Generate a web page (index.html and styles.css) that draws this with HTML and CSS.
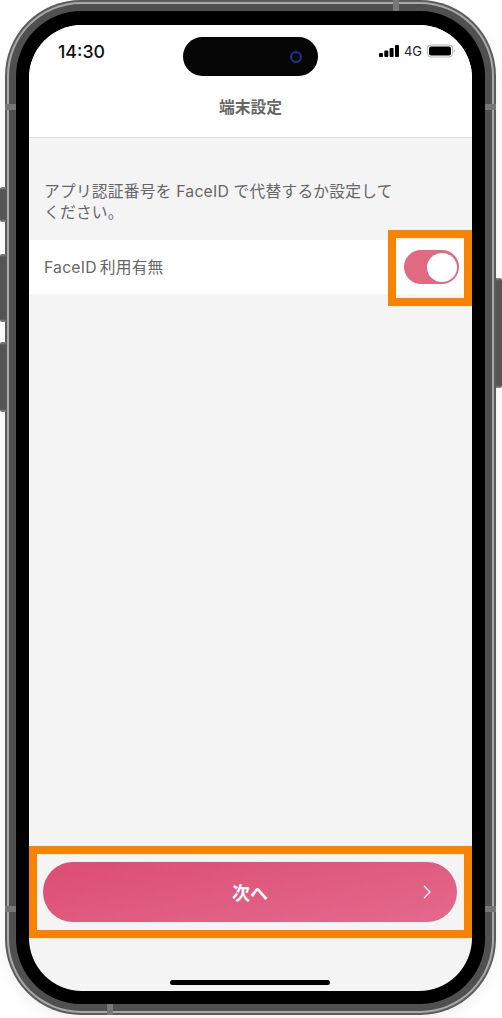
FILE: index.html
```html
<!DOCTYPE html>
<html lang="ja">
<head>
<meta charset="utf-8">
<title>端末設定</title>
<link rel="stylesheet" href="styles.css">
</head>
<body>
<div class="device">
  <span class="side side-l1"></span>
  <span class="side side-l2"></span>
  <span class="side side-l3"></span>
  <span class="side side-r"></span>
  <div class="frame">
    <div class="rim">
      <div class="band">
        <div class="bezel">
          <div class="screen">
            <header class="header">
              <div class="status">
                <span class="time">14:30</span>
                <div class="island"><span class="camera"></span></div>
                <div class="indicators">
                  <svg class="signal" width="20" height="12" viewBox="0 0 20 12"><rect x="0" y="8" width="4" height="4" rx="1"/><rect x="5.300" y="5.500" width="4" height="6.500" rx="1"/><rect x="10.600" y="3" width="4" height="9" rx="1"/><rect x="16" y="0" width="4" height="12" rx="1"/></svg>
                  <span class="network">4G</span>
                  <svg class="battery" width="28" height="14" viewBox="0 0 28 14"><rect x="0.5" y="1" width="25" height="12" rx="3.5" fill="#fff" stroke="#b5b5b5"/><rect x="2" y="2.5" width="22" height="9" rx="2.2" fill="#000"/><path d="M27 5.5v3c.6-.2 1-.8 1-1.500s-.4-1.300-1-1.500z" fill="#a8a8a8"/></svg>
                </div>
              </div>
              <h1 class="title">端末設定</h1>
            </header>
            <main class="content">
              <p class="lead">アプリ認証番号を FaceID で代替するか設定してください。</p>
              <div class="row">
                <span class="row-label">FaceID<span class="row-rest">利用有無</span></span>
                <div class="toggle-wrap">
                  <div class="toggle"><span class="knob"></span></div>
                  <span class="mark mark-toggle"></span>
                </div>
              </div>
            </main>
            <footer class="footer">
              <div class="action">
                <button class="next" type="button">
                  <span>次へ</span>
                  <svg class="chevron" width="8" height="14" viewBox="0 0 8 14"><path d="M1 1l6 6-6 6" fill="none" stroke="#fff" stroke-width="1.200"/></svg>
                </button>
                <span class="mark mark-action"></span>
              </div>
              <div class="home"></div>
            </footer>
          </div>
        </div>
      </div>
    </div>
  </div>
  <span class="tick tick-lt"></span>
  <span class="tick tick-rt"></span>
  <span class="tick tick-lb"></span>
  <span class="tick tick-rb"></span>
  <span class="tick-v tick-top"></span>
  <span class="tick-v tick-bottom"></span>
</div>
</body>
</html>
```
FILE: styles.css
```css
* { box-sizing: border-box; }
html, body { margin: 0; padding: 0; background: #fff; }
body {
  width: 502px;
  height: 1018px;
  overflow: hidden;
  font-family: Inter, "Noto Sans CJK JP", sans-serif;
}
.device {
  position: relative;
  width: 491px;
  height: 1015px;
  margin-left: 5px;
}
.frame {
  height: 100%;
  padding: 2px;
  border-radius: 76px;
  background: #5c5c5c;
  box-shadow: 0 6px 14px rgba(0, 0, 0, .06);
}
.rim {
  height: 100%;
  padding: 2px;
  border-radius: 74px;
  background: #a9a9a9;
}
.band {
  height: 100%;
  padding: 7px;
  border-radius: 72px;
  background: #505050;
}
.bezel {
  height: 100%;
  padding: 14px 13px 13px;
  border-radius: 65px;
  background: #000;
}
.screen {
  display: flex;
  flex-direction: column;
  height: 100%;
  overflow: hidden;
  border-radius: 53px;
  background: #f4f4f4;
}
.header {
  flex: none;
  height: 113px;
  background: #fff;
  border-bottom: 1px solid #dcdcdc;
}
.status {
  position: relative;
  display: flex;
  align-items: center;
  justify-content: space-between;
  height: 52px;
  padding: 0 17px 0 29px;
}
.time {
  font-size: 17.750px;
  font-weight: 500;
  color: #111;
}
.island {
  position: absolute;
  left: 154px;
  top: 12px;
  width: 135px;
  height: 39px;
  border-radius: 20px;
  background: #050505;
}
.camera {
  position: absolute;
  right: 16px;
  top: 14px;
  width: 12px;
  height: 12px;
  border: 2px solid #12388f;
  border-radius: 50%;
  background: #03040a;
}
.indicators {
  display: flex;
  align-items: center;
  gap: 5px;
}
.signal { display: block; fill: #000; }
.network {
  font-size: 13px;
  line-height: 14px;
  color: #222;
}
.battery { display: block; }
.title {
  margin: 20px 0 0;
  font-size: 15.750px;
  font-weight: 700;
  line-height: 22px;
  text-align: center;
  color: #666;
}
.content {
  flex: 1;
  padding-top: 43px;
}
.lead {
  margin: 0;
  padding: 0 66px 0 15px;
  font-size: 15.750px;
  line-height: 21px;
  letter-spacing: .2px;
  color: #666;
}
.row {
  display: flex;
  align-items: center;
  justify-content: space-between;
  height: 54px;
  margin-top: 17px;
  padding: 0 13px 0 15px;
  background: #fff;
}
.row-label {
  margin-top: -2px;
  font-size: 15.750px;
  letter-spacing: .2px;
  color: #666;
}
.row-rest { margin-left: 3px; }
.toggle-wrap { position: relative; }
.toggle {
  position: relative;
  width: 55px;
  height: 34px;
  border-radius: 17px;
  background: #e06b80;
}
.knob {
  position: absolute;
  right: 2px;
  top: 3px;
  width: 30px;
  height: 29px;
  border-radius: 50%;
  background: #fff;
}
.mark {
  position: absolute;
  border: 8px solid #f98200;
  pointer-events: none;
}
.mark-toggle { left: -16px; right: -13px; top: -20px; bottom: -22px; }
.footer {
  flex: none;
  padding: 0 15px 0 14px;
}
.action { position: relative; }
.next {
  position: relative;
  display: block;
  width: 100%;
  height: 60px;
  padding: 0;
  border: 0;
  border-radius: 30px;
  background: linear-gradient(170deg, #dc4d72 0%, #e36a8d 100%);
  font: 700 18px Inter, "Noto Sans CJK JP", sans-serif;
  color: #fff;
}
.chevron {
  position: absolute;
  right: 26px;
  top: 23px;
}
.mark-action { left: -14px; right: -15px; top: -16px; bottom: -16px; }
.home {
  width: 160px;
  height: 5px;
  margin: 58px 0 6px 127px;
  border-radius: 3px;
  background: #000;
}
.side {
  position: absolute;
  width: 6px;
  background: linear-gradient(#8a8a8a 0, #555 3px, #555 calc(100% - 3px), #8a8a8a 100%);
}
.side-l1 { left: -5px; top: 187px; height: 35px; border-radius: 2px 0 0 2px; }
.side-l2 { left: -5px; top: 254px; height: 68px; border-radius: 2px 0 0 2px; }
.side-l3 { left: -5px; top: 342px; height: 70px; border-radius: 2px 0 0 2px; }
.side-r { right: -6px; top: 278px; height: 110px; border-radius: 0 2px 2px 0; }
.tick {
  position: absolute;
  width: 11px;
  height: 6px;
  background: #777;
}
.tick-lt { left: 0; top: 104px; }
.tick-rt { right: 0; top: 104px; }
.tick-lb { left: 0; top: 906px; }
.tick-rb { right: 0; top: 906px; }
.tick-v {
  position: absolute;
  width: 6px;
  height: 11px;
  background: #777;
}
.tick-top { left: 388px; top: 0; }
.tick-bottom { left: 102px; bottom: 0; }
```
